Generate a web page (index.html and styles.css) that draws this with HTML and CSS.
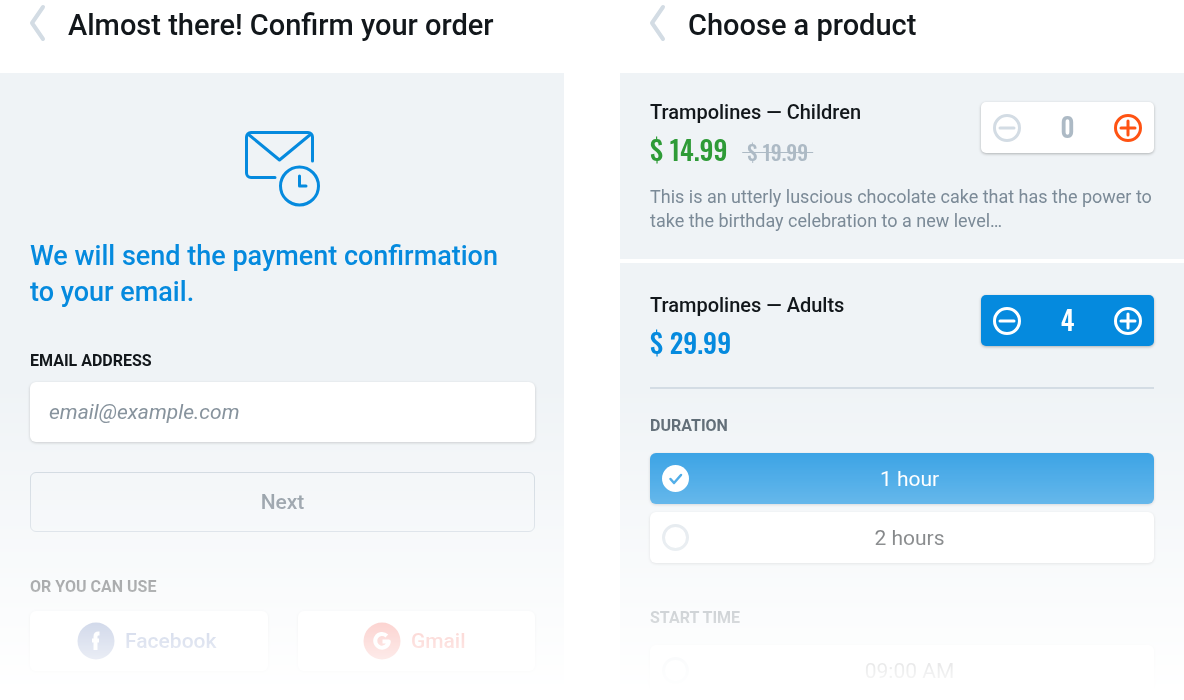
FILE: index.html
```
<!DOCTYPE html>
<html lang="en">
	<head>
		<meta charset="UTF-8">
		<meta name="viewport" content="width=device-width, initial-scale=1">
		<title>Confirm your order</title>
		<link rel="stylesheet" href="styles.css">
	</head>
	<body>
		<main class="screens">
			<section class="screen">
				<header class="top">
					<a class="back" href="#" aria-label="Back"><svg width="20" height="38" viewBox="0 0 20 38"><path d="M15 3 4 19l11 16"/></svg></a>
					<h1>Almost there! Confirm your order</h1>
				</header>
				<form class="panel confirm">
					<svg class="mail" width="76" height="76" viewBox="0 0 76 76">
						<path d="M30 46.500H6a4.500 4.500 0 0 1-4.500-4.500V6A4.500 4.500 0 0 1 6 1.500h57A4.500 4.500 0 0 1 67.500 6v24M3 3l31.500 26L66 3"/>
						<circle cx="54.500" cy="55" r="19"/>
						<path d="M54.500 45v10H61"/>
					</svg>
					<h2>We will send the payment confirmation to your email.</h2>
					<label class="caption" for="email">EMAIL ADDRESS</label>
					<input class="email" id="email" type="email" placeholder="email@example.com">
					<button class="next" type="button">Next</button>
					<p class="caption">OR YOU CAN USE</p>
					<div class="social">
						<button class="facebook" type="button">
							<svg width="38" height="38" viewBox="0 0 38 38">
								<circle cx="19" cy="19" r="18.500"/>
								<path d="M22.500 11.500h-1q-3 0-3 3V28M15 18.500h7"/>
							</svg>
							Facebook
						</button>
						<button class="gmail" type="button">
							<svg width="38" height="38" viewBox="0 0 38 38">
								<circle cx="19" cy="19" r="18.500"/>
								<path d="M23.800 14A6.800 6.800 0 1 0 25.800 19.500H19.500"/>
							</svg>
							Gmail
						</button>
					</div>
				</form>
			</section>

			<section class="screen">
				<header class="top">
					<a class="back" href="#" aria-label="Back"><svg width="20" height="38" viewBox="0 0 20 38"><path d="M15 3 4 19l11 16"/></svg></a>
					<h1>Choose a product</h1>
				</header>
				<form class="panel">
					<article class="product">
						<div class="summary">
							<div>
								<h3>Trampolines — Children</h3>
								<p class="price sale">$ 14.99 <s>&nbsp;$ 19.99&nbsp;</s></p>
							</div>
							<div class="stepper">
								<button class="off" type="button" aria-label="Less"><svg width="28" height="28" viewBox="0 0 28 28"><circle cx="14" cy="14" r="12.500"/><path d="M7 14h14"/></svg></button>
								<output>0</output>
								<button class="add" type="button" aria-label="More"><svg width="28" height="28" viewBox="0 0 28 28"><circle cx="14" cy="14" r="12.500"/><path d="M7 14h14M14 7v14"/></svg></button>
							</div>
						</div>
						<p class="about">This is an utterly luscious chocolate cake that has the power to take the birthday celebration to a new level…</p>
					</article>
					<article class="product">
						<div class="summary">
							<div>
								<h3>Trampolines — Adults</h3>
								<p class="price">$ 29.99</p>
							</div>
							<div class="stepper active">
								<button type="button" aria-label="Less"><svg width="28" height="28" viewBox="0 0 28 28"><circle cx="14" cy="14" r="12.500"/><path d="M7 14h14"/></svg></button>
								<output>4</output>
								<button type="button" aria-label="More"><svg width="28" height="28" viewBox="0 0 28 28"><circle cx="14" cy="14" r="12.500"/><path d="M7 14h14M14 7v14"/></svg></button>
							</div>
						</div>
						<fieldset class="first">
							<legend>DURATION</legend>
							<label class="option"><input checked name="duration" type="radio"><span>1 hour</span></label>
							<label class="option"><input name="duration" type="radio"><span>2 hours</span></label>
						</fieldset>
						<fieldset>
							<legend>START TIME</legend>
							<label class="option"><input name="start" type="radio"><span>09:00 AM</span></label>
						</fieldset>
					</article>
				</form>
			</section>
		</main>
	</body>
</html>
```
FILE: styles.css
```
* {
	box-sizing: border-box;
}
body {
	background: #fff;
	color: #12171b;
	font-family: Roboto, "Liberation Sans", sans-serif;
	margin: 0;
}
h1, h2, h3, p {
	font-weight: 500;
	margin: 0;
}
button, input {
	font-family: inherit;
	margin: 0;
}
button {
	cursor: pointer;
}
svg {
	display: block;
	fill: none;
	stroke: currentColor;
	stroke-linecap: round;
	stroke-linejoin: round;
	stroke-width: 3;
}

.screens {
	display: grid;
	gap: 56px;
	grid-template-columns: 1fr 1fr;
	height: 100vh;
	overflow: hidden;
}
.screen {
	display: flex;
	flex-direction: column;
	/* both screens fade out towards the bottom of the window */
	mask-image: linear-gradient(#000 55%, transparent 99%);
	min-height: 0;
	overflow: hidden;
}
.top {
	align-items: flex-start;
	display: flex;
	gap: 20px;
	padding: 4px 28px 27px;
}
.back {
	color: #d3dce4;
}
.back svg {
	stroke-width: 4;
}
h1 {
	font-size: 29px;
	line-height: 42px;
}
.panel {
	background: #eff3f6;
	flex: 1 0 auto;
}

.confirm {
	display: flex;
	flex-direction: column;
	padding: 58px 29px 28px 30px;
}
.mail {
	align-self: center;
	color: #058ade;
}
h2 {
	color: #058ade;
	font-size: 27px;
	line-height: 36px;
	margin: 31px 0 41px;
	padding-right: 30px;
}
.caption, legend {
	font-size: 16px;
	font-weight: bold;
	line-height: 20px;
	padding: 0;
}
.email {
	background: #fff;
	border: 0;
	border-radius: 6px;
	box-shadow: 0 1px 3px #0003;
	font-size: 21px;
	height: 60px;
	margin: 11px 0 30px;
	padding: 0 19px;
}
.email::placeholder {
	color: #7b8893;
	font-style: italic;
}
.next {
	background: none;
	border: 1px solid #c3ced8;
	border-radius: 6px;
	color: #65737f;
	font-size: 21px;
	font-weight: 500;
	height: 60px;
	margin-bottom: 45px;
}
.social {
	display: grid;
	gap: 30px;
	grid-template-columns: 1fr 1fr;
	margin-top: 14px;
}
.social button {
	align-items: center;
	background: #fff;
	border: 0;
	border-radius: 6px;
	box-shadow: 0 1px 3px #0003;
	display: flex;
	font-size: 21px;
	font-weight: 500;
	gap: 10px;
	height: 60px;
	justify-content: center;
	padding: 0 10px 0 6px;
}
.social circle {
	fill: currentColor;
	stroke: none;
}
.social path {
	stroke: #fff;
	stroke-linecap: butt;
	stroke-width: 4;
}
.facebook {
	color: #3b5ba5;
}
.gmail {
	color: #f04336;
}

.product {
	padding: 29px 30px 26px;
}
.product + .product {
	border-top: 4px solid #fff;
	padding-top: 32px;
}
.summary {
	align-items: flex-start;
	display: flex;
	justify-content: space-between;
}
h3 {
	font-size: 20px;
	line-height: 20px;
}
.price, output {
	font-family: Oswald, "Roboto Condensed", Roboto, sans-serif;
	font-size: 27px;
	font-weight: 500;
}
.price {
	color: #058ade;
	line-height: 36px;
	margin-top: 9px;
}
.price s {
	color: #adbac5;
	font-size: 21px;
	margin-left: 8px;
	text-decoration-thickness: 1px;
}
.sale {
	color: #2e9b37;
}
.stepper {
	align-items: center;
	background: #fff;
	border-radius: 5px;
	box-shadow: 0 1px 3px #0004;
	display: flex;
	height: 51px;
	justify-content: space-between;
	padding: 0 12px;
	width: 173px;
}
.stepper button {
	background: none;
	border: 0;
	color: inherit;
	padding: 0;
}
.stepper .off {
	color: #d3dce4;
}
.stepper .add {
	color: #ff5313;
}
output {
	color: #adbac5;
	padding-bottom: 4px;
}
.active {
	background: #058ade;
	color: #fff;
}
.active output {
	color: #fff;
}
.about {
	color: #7b8a97;
	font-size: 18px;
	font-weight: normal;
	line-height: 24px;
	margin-top: 15px;
}

fieldset {
	border: 0;
	display: flex;
	flex-direction: column;
	gap: 8px;
	margin: 45px 0 0;
	min-width: 0;
	padding: 0;
}
.first {
	border-top: 2px solid #d3dce4;
	margin-top: 27px;
	padding-top: 27px;
}
legend {
	color: #4c5a65;
	float: left;
	margin-bottom: 9px;
}
.option {
	align-items: center;
	background: #fff;
	border-radius: 6px;
	box-shadow: 0 1px 3px #0003;
	color: #12171b;
	display: flex;
	font-size: 21px;
	height: 51px;
	padding: 0 24px 0 12px;
}
.option span {
	flex: 1;
	text-align: center;
}
.option input {
	appearance: none;
	border: 3px solid #d3dce4;
	border-radius: 50%;
	height: 27px;
	width: 27px;
}
.option:has(:checked) {
	background: #058ade;
	color: #fff;
}
.option input:checked {
	background: #fff url("data:image/svg+xml,%3Csvg xmlns='http://www.w3.org/2000/svg' viewBox='0 0 27 27'%3E%3Cpath d='M8.500 14l3.500 4 7-8' fill='none' stroke='%23058ade' stroke-width='2.500' stroke-linecap='round' stroke-linejoin='round'/%3E%3C/svg%3E");
	border: 0;
}
```
